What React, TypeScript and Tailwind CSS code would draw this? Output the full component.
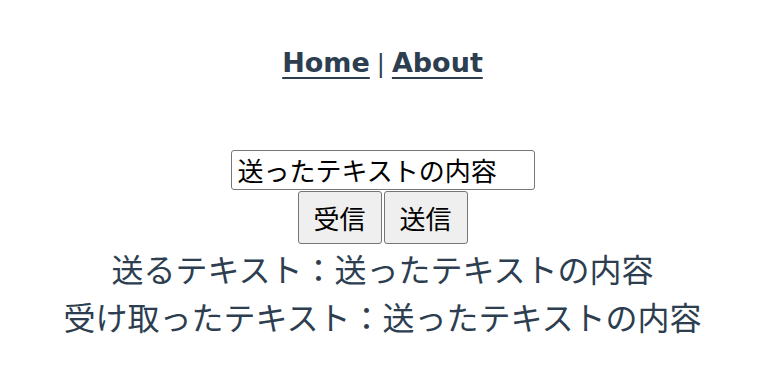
export default function App() {
  return (
    <div
      className="min-h-screen w-[765px] bg-white text-center text-[#2c3e50] antialiased"
      style={{ fontFamily: '"DejaVu Sans", "Noto Sans CJK JP", sans-serif' }}
    >
      {/* Nav */}
      <nav className="pt-[43px] text-[27px] leading-[40px]">
        <a href="#" className="font-bold underline decoration-2 underline-offset-[5px]">
          Home
        </a>
        <span className="mx-[7px] font-normal text-[24px]">|</span>
        <a href="#" className="font-bold underline decoration-2 underline-offset-[5px]">
          About
        </a>
      </nav>

      <main
        className="mt-[66px] flex flex-col items-center"
        style={{ fontFamily: '"Noto Sans CJK JP", sans-serif' }}
      >
        <input
          type="text"
          defaultValue="送ったテキストの内容"
          className="h-[40px] w-[304px] rounded-[3px] border border-[#767676] px-[6px] pb-[2px] text-[26px] leading-[36px] text-black"
        />
        <div className="mt-px flex gap-[2px]">
          <button className="h-[53px] w-[84px] rounded-[3px] border border-[#767676] bg-[#efefef] text-[26px] text-black">
            受信
          </button>
          <button className="h-[53px] w-[84px] rounded-[3px] border border-[#767676] bg-[#efefef] text-[26px] text-black">
            送信
          </button>
        </div>
        <div className="text-[32px] leading-[48px]">
          <p>送るテキスト：送ったテキストの内容</p>
          <p>受け取ったテキスト：送ったテキストの内容</p>
        </div>
      </main>
    </div>
  );
}
